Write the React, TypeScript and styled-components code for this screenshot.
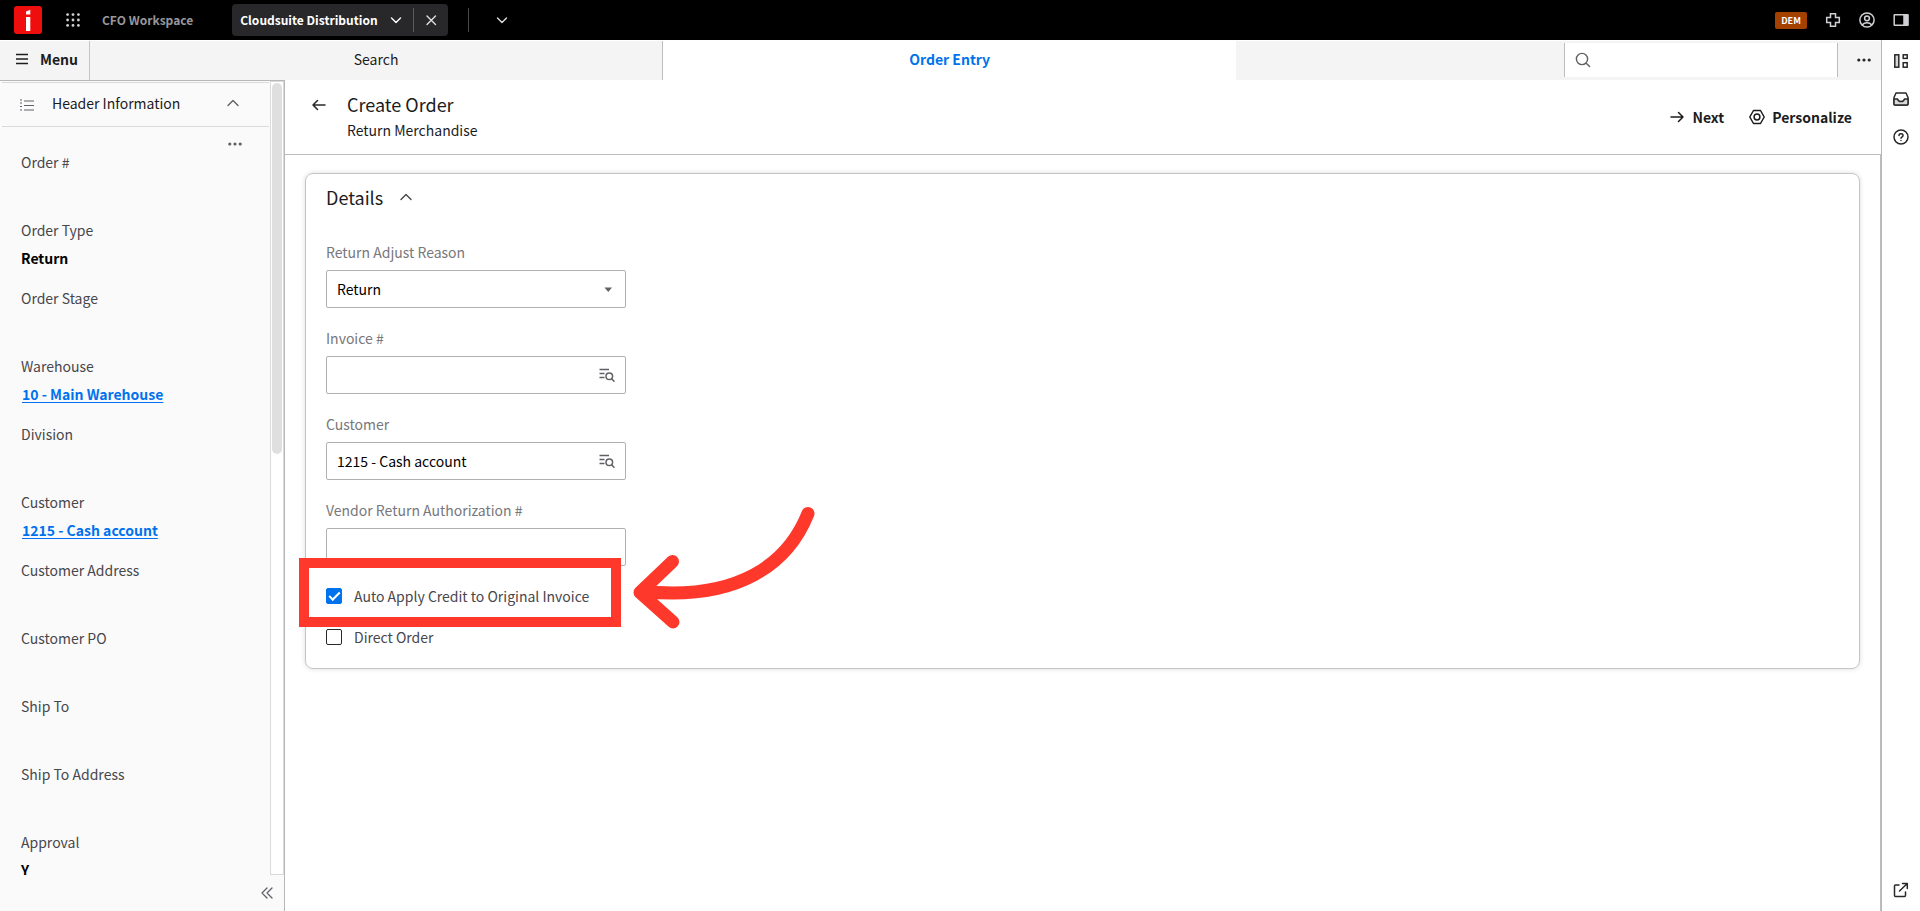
import React, { useState } from "react";
import styled, { createGlobalStyle } from "styled-components";

const GlobalStyle = createGlobalStyle`
  *, *::before, *::after { box-sizing: border-box; }
  body {
    margin: 0;
    background: #ffffff;
    color: #1c1c1e;
    font-family: "Noto Sans CJK SC", "Noto Sans", sans-serif;
    font-size: 14px;
    line-height: 20px;
  }
  button, input, select { font: inherit; color: inherit; }
`;

const Shell = styled.div`
  display: flex;
  flex-direction: column;
  height: 100vh;
`;

const IconButton = styled.button<{ $width?: number; $color?: string }>`
  display: inline-flex;
  align-items: center;
  justify-content: center;
  flex: none;
  width: ${(p) => p.$width ?? 16}px;
  height: 16px;
  padding: 0;
  border: 0;
  background: none;
  color: ${(p) => p.$color ?? "#28282a"};
  cursor: pointer;
  svg { flex: none; }
`;

/* ---- top bar ---- */

const TopBar = styled.header`
  display: flex;
  align-items: center;
  flex: none;
  height: 40px;
  padding: 0 11px 0 14px;
  background: #000000;
  color: #d0d0d4;
`;

const AppsButton = styled(IconButton)`
  margin-left: 23px;
`;

const WorkspaceLink = styled.a`
  margin-left: 21px;
  color: #97979b;
  font-size: 12px;
  font-weight: 700;
  text-decoration: none;
`;

const AppTab = styled.div`
  display: flex;
  align-items: center;
  height: 32px;
  margin-left: 39px;
  border-radius: 4px;
  background: #28282a;
`;

const AppTabButton = styled.button`
  display: flex;
  align-items: center;
  gap: 12px;
  height: 24px;
  padding: 0 11px 0 8px;
  border: 0;
  border-right: 1px solid #5c5c61;
  background: none;
  color: #ffffff;
  font-size: 12px;
  font-weight: 700;
  white-space: nowrap;
`;

const BarDivider = styled.span`
  width: 1px;
  height: 24px;
  margin: 0 25px 0 20px;
  background: #47474c;
`;

const TopActions = styled.div`
  display: flex;
  align-items: center;
  gap: 18px;
  margin-left: auto;
`;

const EnvBadge = styled.span`
  width: 32px;
  border-radius: 2px;
  background: #a34100;
  color: #ffffff;
  font-size: 9px;
  font-weight: 700;
  line-height: 17px;
  text-align: center;
`;

/* ---- body ---- */

const Body = styled.div`
  display: flex;
  flex: 1;
  min-height: 0;
`;

const Workspace = styled.div`
  display: flex;
  flex: 1;
  flex-direction: column;
  min-width: 0;
`;

const NavRow = styled.nav`
  display: flex;
  flex: none;
  height: 40px;
  border-top: 1px solid #ffffff;
  background: #f4f4f4;
`;

const MenuButton = styled.button`
  display: flex;
  align-items: center;
  gap: 12px;
  width: 90px;
  padding: 0 0 3px 16px;
  border: 0;
  border-right: 1px solid #c5c5c9;
  background: none;
  font-weight: 700;
  white-space: nowrap;
`;

const NavTab = styled.button<{ $active?: boolean }>`
  flex: 0 0 32%;
  padding: 0 0 3px;
  border: 0;
  border-right: ${(p) => (p.$active ? "0" : "1px solid #bdbdc1")};
  background: ${(p) => (p.$active ? "#ffffff" : "transparent")};
  color: ${(p) => (p.$active ? "#0072ed" : "#1c1c1e")};
  font-weight: ${(p) => (p.$active ? 700 : 400)};
`;

const NavTabs = styled.div`
  display: flex;
  flex: 1;
  min-width: 0;
`;

const NavTools = styled.div`
  display: flex;
  align-items: center;
  flex: 1;
  justify-content: flex-end;
  padding: 0 9px 1px 0;
`;

const SearchBox = styled.label`
  display: flex;
  align-items: center;
  gap: 8px;
  width: 274px;
  height: 34px;
  margin-right: 18px;
  padding: 0 10px;
  border: 1px solid #bdbdc1;
  border-width: 0 1px;
  background: #ffffff;
  color: #606066;
  svg { flex: none; }
`;

const BareInput = styled.input`
  flex: 1;
  min-width: 0;
  padding: 0;
  border: 0;
  outline: 0;
  background: none;
  color: #000000;
`;

const Content = styled.div`
  display: flex;
  flex: 1;
  min-height: 0;
`;

/* ---- sidebar ---- */

const Sidebar = styled.aside`
  display: flex;
  flex: none;
  flex-direction: column;
  width: 285px;
  border-top: 1px solid #b7b7ba;
  border-right: 1px solid #b7b7ba;
  background: #fafafa;
`;

const SidebarScroll = styled.div`
  display: flex;
  flex: 1;
  min-height: 0;
`;

const SidebarBody = styled.div`
  flex: 1;
  padding: 1px 1px 0 2px;
  overflow: hidden;
`;

const SidebarHeader = styled.button`
  display: flex;
  align-items: center;
  width: 100%;
  height: 45px;
  padding: 0 30px 0 18px;
  border: 1px solid #dadadc;
  border-width: 1px 0;
  background: none;
  text-align: left;
  svg { flex: none; color: #606066; }
  span { flex: 1; margin-left: 18px; }
  span, svg:last-child { margin-bottom: 3px; }
`;

const SidebarTools = styled.div`
  display: flex;
  justify-content: flex-end;
  height: 25px;
  padding: 9px 26px 0 0;
`;

const FieldList = styled.dl`
  display: grid;
  gap: 20px;
  margin: 0;
  padding-left: 19px;
`;

const FieldItem = styled.div`
  height: 48px;
  dt { margin-bottom: 8px; color: #47474c; }
  dd { margin: 0; color: #000000; font-weight: 700; }
  a { margin-left: 1px; color: #0072ed; text-underline-offset: 2px; }
`;

const ScrollTrack = styled.div`
  width: 14px;
  padding: 1px;
  border: 1px solid #dadadc;
  background: #ffffff;
`;

const ScrollThumb = styled.div`
  height: 47%;
  border-radius: 5px;
  background: #dfdfdf;
`;

const SidebarFooter = styled.div`
  display: flex;
  align-items: center;
  justify-content: flex-end;
  flex: none;
  height: 36px;
  padding-right: 9px;
`;

/* ---- main ---- */

const Main = styled.main`
  display: flex;
  flex: 1;
  flex-direction: column;
  min-width: 0;
`;

const PageHeader = styled.div`
  display: flex;
  flex: none;
  height: 75px;
  padding: 10px 29px 0 26px;
  border-bottom: 1px solid #bdbdc1;
`;

const BackButton = styled(IconButton)`
  height: 30px;
  margin-right: 20px;
`;

const Titles = styled.div`
  flex: 1;
`;

const Title = styled.h1`
  margin: 0;
  font-size: 18px;
  font-weight: 400;
  line-height: 28px;
`;

const Subtitle = styled.p`
  margin: 0;
  line-height: 24px;
`;

const HeaderActions = styled.div`
  display: flex;
  align-items: center;
  gap: 25px;
  height: 54px;
`;

const ActionButton = styled.button`
  display: flex;
  align-items: center;
  gap: 7px;
  padding: 0;
  border: 0;
  background: none;
  font-weight: 700;
`;

const PageBody = styled.div`
  flex: 1;
  min-height: 0;
  padding: 18px 20px;
  border-right: 1px solid #bdbdc1;
`;

const Card = styled.section`
  padding: 9px 20px 21px;
  border: 1px solid #c5c5c9;
  border-radius: 8px;
  box-shadow: 0 0 5px rgba(0, 0, 0, 0.14);
`;

const CardHeader = styled.div`
  display: flex;
  align-items: center;
  gap: 15px;
  margin-bottom: 31px;
`;

const CardTitle = styled.h2`
  margin: 0;
  font-size: 18px;
  font-weight: 400;
  line-height: 28px;
`;

const Form = styled.form`
  display: grid;
  gap: 20px;
  width: 300px;
`;

const FormField = styled.div`
  display: grid;
  gap: 8px;
  label { color: #77777c; }
`;

const Control = styled.div`
  display: flex;
  align-items: center;
  height: 38px;
  padding: 0 10px;
  border: 1px solid #b0b0b4;
  border-radius: 2px;
  background: #ffffff;
  color: #606066;
`;

const Select = styled.select`
  appearance: none;
  flex: 1;
  padding: 0;
  border: 0;
  outline: 0;
  background: none;
  color: #000000;
`;

const Checks = styled.div`
  display: grid;
  gap: 21px;
`;

const CheckRow = styled.div`
  position: relative;
  display: flex;
  align-items: center;
  height: 20px;
  label { margin-left: 12px; color: #47474c; white-space: nowrap; }
`;

const Checkbox = styled.input`
  appearance: none;
  display: grid;
  place-items: center;
  flex: none;
  width: 16px;
  height: 16px;
  margin: 0;
  border: 1px solid #28282a;
  border-radius: 2px;
  background: #ffffff;
  &:checked { border-color: #0072ed; background: #0072ed; }
  &:checked::after {
    content: "";
    width: 11px;
    height: 6px;
    margin-bottom: 3px;
    border: solid #ffffff;
    border-width: 0 0 2px 2px;
    transform: rotate(-45deg);
  }
`;

const Highlight = styled.span`
  position: absolute;
  top: -28px;
  left: -27px;
  width: 322px;
  height: 69px;
  border: 10px solid #ff382c;
  pointer-events: none;
`;

const HighlightArrow = styled.svg`
  position: absolute;
  top: -86px;
  left: 304px;
  pointer-events: none;
`;

/* ---- right rail ---- */

const Rail = styled.aside`
  display: flex;
  flex: none;
  flex-direction: column;
  align-items: center;
  gap: 22px;
  width: 39px;
  padding: 13px 0;
  border-left: 1px solid #b7b7ba;
  button:last-child { margin-top: auto; }
`;

/* ---- icons ---- */

type IconProps = { size?: number; stroke?: number; children: React.ReactNode };
const Icon = ({ size = 16, stroke = 1.5, children }: IconProps) => (
  <svg width={size} height={size} viewBox={`0 0 ${size} ${size}`} fill="none" stroke="currentColor"
    strokeWidth={stroke} strokeLinecap="round" strokeLinejoin="round" aria-hidden="true">{children}</svg>
);

const Logo = () => (
  <svg width="28" height="28" viewBox="0 0 28 28" aria-label="Infor" role="img">
    <rect width="28" height="28" rx="3" fill="#ef0d0d" />
    <path d="M12 11H16.300V25H12Z M12 5.500L16.300 3.800V8.500H12Z" fill="#ffffff" />
  </svg>
);
const AppsIcon = () => (
  <svg width="14" height="14" viewBox="0 0 14 14" fill="currentColor" aria-hidden="true">
    {[1.6, 7, 12.4].map((y) => [1.6, 7, 12.4].map((x) => <circle key={`${x}-${y}`} cx={x} cy={y} r="1.4" />))}
  </svg>
);
const ChevronDown = () => <Icon size={12} stroke={1.4}><path d="M1.500 4L6 8.500L10.500 4" /></Icon>;
const ChevronUp = () => <Icon size={12} stroke={1.4}><path d="M1 8.500L6 3.500L11 8.500" /></Icon>;
const CloseIcon = () => <Icon size={12} stroke={1.4}><path d="M2 2L10.500 10.500M10.500 2L2 10.500" /></Icon>;
const PlusIcon = () => <Icon><path strokeLinejoin="miter" d="M5.500 1.700H10.500V5.500H14.300V10.500H10.500V14.300H5.500V10.500H1.700V5.500H5.500Z" /></Icon>;
const UserIcon = () => <Icon><circle cx="8" cy="8" r="7.100" /><circle cx="8" cy="6.300" r="2.400" /><path d="M3.500 13C4.500 11 6 10.800 8 10.800S11.500 11 12.500 13" /></Icon>;
const PanelIcon = () => <Icon><rect x="1.200" y="2.700" width="13.600" height="10.600" rx="0.500" /><rect x="11" y="2.700" width="3.800" height="10.600" fill="currentColor" /></Icon>;
const MenuIcon = () => <Icon size={12}><path strokeLinecap="butt" d="M0 1.500H12M0 6H12M0 10.500H12" /></Icon>;
const SearchIcon = () => <Icon stroke={1.4}><circle cx="7" cy="7" r="5.600" /><path d="M11.200 11.200L14.600 14.600" /></Icon>;
const MoreIcon = () => (
  <svg width="14" height="4" viewBox="0 0 14 4" fill="currentColor" aria-hidden="true">
    <circle cx="1.800" cy="2" r="1.600" /><circle cx="7" cy="2" r="1.600" /><circle cx="12.200" cy="2" r="1.600" />
  </svg>
);
const ListIcon = () => <Icon size={14} stroke={1.2}><path strokeLinecap="butt" d="M4 3H14M4 7.500H14M4 12H14M0 2H2M0 5H2M0 8.500H2M0 12H2" /></Icon>;
const CollapseIcon = () => <Icon stroke={1.3}><path d="M8 3L3 8L8 13M13 3L8 8L13 13" /></Icon>;
const ArrowLeft = () => <Icon><path d="M14 8H2M6.500 3.500L2 8L6.500 12.500" /></Icon>;
const ArrowRight = () => <Icon><path d="M2 8H14M9.500 3.500L14 8L9.500 12.500" /></Icon>;
const GearIcon = () => <Icon><path d="M4.500 1.500H11.500L15.200 8L11.500 14.500H4.500L0.800 8Z" /><circle cx="8" cy="8" r="2.900" /></Icon>;
const LookupIcon = () => <Icon><path strokeLinecap="butt" d="M0.500 2.500H10M0.500 6.500H5.500M0.500 10.500H5.500" /><circle cx="10.300" cy="9.300" r="3.300" /><path d="M12.800 11.900L15 14.200" /></Icon>;
const WidgetsIcon = () => <Icon><rect x="1.800" y="1.800" width="4" height="12.400" fill="#d8d8d8" strokeLinejoin="miter" /><rect x="10.200" y="1.800" width="4" height="3.600" strokeLinejoin="miter" /><rect x="10.200" y="9.700" width="4" height="4.500" strokeLinejoin="miter" /></Icon>;
const InboxIcon = () => <Icon><path d="M3 2H13L15 6.500V13A1 1 0 0 1 14 14H2A1 1 0 0 1 1 13V6.500Z" /><path fill="#d8d8d8" d="M1 8H4.500C5 10 6 10.500 8 10.500S11 10 11.500 8H15V13A1 1 0 0 1 14 14H2A1 1 0 0 1 1 13Z" /></Icon>;
const HelpIcon = () => <Icon><circle cx="8" cy="8" r="7" /><path d="M6 6.500C6 4.200 10 4.200 10 6.500C10 8 8 8 8 9.200M8 11.500V11.600" /></Icon>;
const ExternalIcon = () => <Icon><path d="M6 3H2.500A1 1 0 0 0 1.500 4V13.500A1 1 0 0 0 2.500 14.500H11.500A1 1 0 0 0 12.500 13.500V10M6.500 9L14 1.800M9.500 1.500H14.300V6.500" /></Icon>;
const CaretDown = () => <svg width="12" height="5" viewBox="0 0 12 5" fill="#606066" aria-hidden="true"><path d="M1.500 0.500H9L5.250 5Z" /></svg>;

/* ---- data ---- */

const fields: { label: string; value?: string; link?: boolean }[] = [
  { label: "Order #" },
  { label: "Order Type", value: "Return" },
  { label: "Order Stage" },
  { label: "Warehouse", value: "10 - Main Warehouse", link: true },
  { label: "Division" },
  { label: "Customer", value: "1215 - Cash account", link: true },
  { label: "Customer Address" },
  { label: "Customer PO" },
  { label: "Ship To" },
  { label: "Ship To Address" },
  { label: "Approval", value: "Y" },
];

const TextField = ({ id, label, initial = "", lookup = false }: { id: string; label: string; initial?: string; lookup?: boolean }) => (
  <FormField>
    <label htmlFor={id}>{label}</label>
    <Control>
      <BareInput id={id} defaultValue={initial} />
      {lookup && <IconButton type="button" $color="#606066" aria-label={`Look up ${label}`}><LookupIcon /></IconButton>}
    </Control>
  </FormField>
);

export default function App() {
  const [autoApply, setAutoApply] = useState(true);
  const [direct, setDirect] = useState(false);
  return (
    <Shell>
      <GlobalStyle />
      <TopBar>
        <Logo />
        <AppsButton $color="#d0d0d4" aria-label="Applications"><AppsIcon /></AppsButton>
        <WorkspaceLink href="#workspace">CFO Workspace</WorkspaceLink>
        <AppTab>
          <AppTabButton>Cloudsuite Distribution<ChevronDown /></AppTabButton>
          <IconButton $width={34} $color="#e0e0e2" aria-label="Close tab"><CloseIcon /></IconButton>
        </AppTab>
        <BarDivider />
        <IconButton $color="#e0e0e2" aria-label="More tabs"><ChevronDown /></IconButton>
        <TopActions>
          <EnvBadge>DEM</EnvBadge>
          <IconButton $color="#d0d0d4" aria-label="Add"><PlusIcon /></IconButton>
          <IconButton $color="#d0d0d4" aria-label="Profile"><UserIcon /></IconButton>
          <IconButton $color="#d0d0d4" aria-label="Toggle panel"><PanelIcon /></IconButton>
        </TopActions>
      </TopBar>
      <Body>
        <Workspace>
          <NavRow>
            <MenuButton><MenuIcon />Menu</MenuButton>
            <NavTabs>
              <NavTab>Search</NavTab>
              <NavTab $active>Order Entry</NavTab>
              <NavTools>
                <SearchBox>
                  <SearchIcon />
                  <BareInput aria-label="Search" />
                </SearchBox>
                <IconButton aria-label="More"><MoreIcon /></IconButton>
              </NavTools>
            </NavTabs>
          </NavRow>
          <Content>
            <Sidebar>
              <SidebarScroll>
                <SidebarBody>
                  <SidebarHeader>
                    <ListIcon /><span>Header Information</span><ChevronUp />
                  </SidebarHeader>
                  <SidebarTools>
                    <IconButton $color="#606066" aria-label="Header options"><MoreIcon /></IconButton>
                  </SidebarTools>
                  <FieldList>
                    {fields.map((f) => (
                      <FieldItem key={f.label}>
                        <dt>{f.label}</dt>
                        <dd>{f.link ? <a href="#details">{f.value}</a> : f.value}</dd>
                      </FieldItem>
                    ))}
                  </FieldList>
                </SidebarBody>
                <ScrollTrack><ScrollThumb /></ScrollTrack>
              </SidebarScroll>
              <SidebarFooter>
                <IconButton $color="#606066" aria-label="Collapse sidebar"><CollapseIcon /></IconButton>
              </SidebarFooter>
            </Sidebar>
            <Main>
              <PageHeader>
                <BackButton aria-label="Back"><ArrowLeft /></BackButton>
                <Titles>
                  <Title>Create Order</Title>
                  <Subtitle>Return Merchandise</Subtitle>
                </Titles>
                <HeaderActions>
                  <ActionButton><ArrowRight />Next</ActionButton>
                  <ActionButton><GearIcon />Personalize</ActionButton>
                </HeaderActions>
              </PageHeader>
              <PageBody>
                <Card>
                  <CardHeader>
                    <CardTitle>Details</CardTitle>
                    <IconButton $color="#47474c" aria-label="Collapse details"><ChevronUp /></IconButton>
                  </CardHeader>
                  <Form onSubmit={(e) => e.preventDefault()}>
                    <FormField>
                      <label htmlFor="reason">Return Adjust Reason</label>
                      <Control>
                        <Select id="reason" defaultValue="Return"><option>Return</option></Select>
                        <CaretDown />
                      </Control>
                    </FormField>
                    <TextField id="invoice" label="Invoice #" lookup />
                    <TextField id="customer" label="Customer" initial="1215 - Cash account" lookup />
                    <TextField id="authorization" label="Vendor Return Authorization #" />
                    <Checks>
                      <CheckRow>
                        <Checkbox type="checkbox" id="auto" checked={autoApply} onChange={(e) => setAutoApply(e.target.checked)} />
                        <label htmlFor="auto">Auto Apply Credit to Original Invoice</label>
                        <Highlight />
                        <HighlightArrow width="190" height="130" viewBox="0 0 190 130" fill="none" stroke="#ff382c"
                          strokeWidth="13" strokeLinecap="round" strokeLinejoin="round" aria-hidden="true">
                          <path d="M178 13.500C158 64 108 101 14 91.500M42.500 61.500L10 92.500L43 122" />
                        </HighlightArrow>
                      </CheckRow>
                      <CheckRow>
                        <Checkbox type="checkbox" id="direct" checked={direct} onChange={(e) => setDirect(e.target.checked)} />
                        <label htmlFor="direct">Direct Order</label>
                      </CheckRow>
                    </Checks>
                  </Form>
                </Card>
              </PageBody>
            </Main>
          </Content>
        </Workspace>
        <Rail>
          <IconButton aria-label="Widgets"><WidgetsIcon /></IconButton>
          <IconButton aria-label="Inbox"><InboxIcon /></IconButton>
          <IconButton aria-label="Help"><HelpIcon /></IconButton>
          <IconButton aria-label="Open in new window"><ExternalIcon /></IconButton>
        </Rail>
      </Body>
    </Shell>
  );
}
